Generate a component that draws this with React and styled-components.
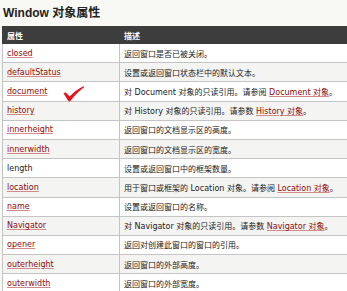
import React from 'react';
import styled, { createGlobalStyle } from 'styled-components';

const rows = [
    { name: 'closed', link: true, desc: ['返回窗口是否已被关闭。'] },
    { name: 'defaultStatus', link: true, desc: ['设置或返回窗口状态栏中的默认文本。'] },
    { name: 'document', link: true, check: true, desc: ['对 Document 对象的只读引用。请参阅 ', { a: 'Document 对象' }, '。'] },
    { name: 'history', link: true, desc: ['对 History 对象的只读引用。请参数 ', { a: 'History 对象' }, '。'] },
    { name: 'innerheight', link: true, desc: ['返回窗口的文档显示区的高度。'] },
    { name: 'innerwidth', link: true, desc: ['返回窗口的文档显示区的宽度。'] },
    { name: 'length', link: false, desc: ['设置或返回窗口中的框架数量。'] },
    { name: 'location', link: true, desc: ['用于窗口或框架的 Location 对象。请参阅 ', { a: 'Location 对象' }, '。'] },
    { name: 'name', link: true, desc: ['设置或返回窗口的名称。'] },
    { name: 'Navigator', link: true, desc: ['对 Navigator 对象的只读引用。请参数 ', { a: 'Navigator 对象' }, '。'] },
    { name: 'opener', link: true, desc: ['返回对创建此窗口的窗口的引用。'] },
    { name: 'outerheight', link: true, desc: ['返回窗口的外部高度。'] },
    { name: 'outerwidth', link: true, desc: ['返回窗口的外部宽度。'] },
];

const App = () => {
    return (
        <>
            <Global />
            <Page>
                <Title>Window 对象属性</Title>
                <Table>
                    <thead>
                        <tr>
                            <Th width="117">属性</Th>
                            <Th>描述</Th>
                        </tr>
                    </thead>
                    <tbody>
                        {rows.map(r => (
                            <Row key={r.name}>
                                <Td>
                                    {r.link ? <Link href="#">{r.name}</Link> : r.name}
                                    {r.check && (
                                        <Check viewBox="0 0 24 18" width="24" height="18">
                                            <path d="M1.5 8.2 Q3.2 6.6 4.8 8.4 L7.6 11.6 Q14 4.6 21.4 1.2 Q22.6 1 22 2.2 Q13.6 8.6 8.6 15.8 Q7.4 17.2 6.2 15.8 Z" fill="#e4121c" />
                                        </Check>
                                    )}
                                </Td>
                                <Td>
                                    {r.desc.map((d, i) => typeof d === 'string'
                                        ? <React.Fragment key={i}>{d}</React.Fragment>
                                        : <Link key={i} href="#">{d.a}</Link>)}
                                </Td>
                            </Row>
                        ))}
                    </tbody>
                </Table>
            </Page>
        </>
    );
};

export default App;

const Global = createGlobalStyle`
    html, body{
        margin:0;
        padding:0;
        background:#f8f8f4;
        overflow:hidden;
    }
`

const Page = styled.div`
    width:347px;
    height:291px;
    overflow:hidden;
    padding:5px 0 0 2px;
    box-sizing:border-box;
    font-family:"DejaVu Sans", "Noto Sans CJK SC", sans-serif;
`

const Title = styled.h2`
    margin:0 0 0 1px;
    height:21px;
    font-family:"Liberation Sans", "Noto Sans CJK SC", sans-serif;
    font-size:12px;
    line-height:16px;
    font-weight:700;
    color:#222;
`

const Table = styled.table`
    width:400px;
    border-collapse:collapse;
    table-layout:fixed;
    font-size:8px;
    color:#222;
`

const Th = styled.th`
    height:17px;
    padding:0 4px;
    box-sizing:border-box;
    background:#3d3d3d;
    border:1px solid #3d3d3d;
    color:#fff;
    font-weight:700;
    text-align:left;
    font-size:8px;
`

const Row = styled.tr`
    background:#fff;
    &:nth-child(even){
        background:#f4f4f2;
    }
`

const Td = styled.td`
    position:relative;
    height:19.2px;
    padding:0 4px;
    box-sizing:border-box;
    border:1px solid #c4c4c4;
    white-space:nowrap;
    vertical-align:middle;
`

const Link = styled.a`
    color:#900b09;
    text-decoration:underline;
    text-decoration-color:#d08a88;
`

const Check = styled.svg`
    position:absolute;
    left:59px;
    top:3px;
`
